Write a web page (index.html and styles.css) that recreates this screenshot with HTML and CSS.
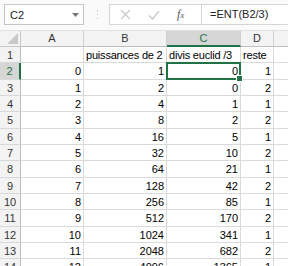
FILE: index.html
```html
<!DOCTYPE html>
<html>
<head>
<meta charset="utf-8">
<link rel="stylesheet" href="styles.css">
</head>
<body>
<div class="app">
  <div class="toolbar">
    <div class="namebox">
      <span class="ref">C2</span>
      <svg class="drop" width="7" height="4" viewBox="0 0 7 4"><path d="M0 0H7L3.5 4Z" fill="#777"/></svg>
    </div>
    <svg class="grip" width="3" height="12" viewBox="0 0 3 12"><rect x="1" y="1" width="1" height="1" fill="#bbb"/><rect x="1" y="5" width="1" height="1" fill="#bbb"/><rect x="1" y="9" width="1" height="1" fill="#bbb"/></svg>
    <div class="fxbox">
      <svg class="ic" width="11" height="11" viewBox="0 0 11 11"><path d="M1 1L10 10M10 1L1 10" stroke="#c8c8c8" stroke-width="1.2" fill="none"/></svg>
      <svg class="ic" width="12" height="10" viewBox="0 0 12 10"><path d="M1 5.5L4.5 9L11 1" stroke="#c8c8c8" stroke-width="1.2" fill="none"/></svg>
      <span class="fx"><i>f</i><span class="x">x</span></span>
    </div>
    <div class="formula">=ENT(B2/3)</div>
  </div>
  <div class="sheet">
    <div class="corner"><svg width="11" height="11" viewBox="0 0 11 11"><path d="M11 0V11H0Z" fill="#c9c9c9"/></svg></div>
    <div class="ch">A</div><div class="ch">B</div><div class="ch sel">C</div><div class="ch">D</div><div class="ch last"></div>

    <div class="rh">1</div><div class="c"></div><div class="c t">puissances de 2</div><div class="c t">divis euclid /3</div><div class="c t">reste</div><div class="c"></div>
    <div class="rh sel">2</div><div class="c">0</div><div class="c">1</div><div class="c active">0</div><div class="c">1</div><div class="c"></div>
    <div class="rh">3</div><div class="c">1</div><div class="c">2</div><div class="c">0</div><div class="c">2</div><div class="c"></div>
    <div class="rh">4</div><div class="c">2</div><div class="c">4</div><div class="c">1</div><div class="c">1</div><div class="c"></div>
    <div class="rh">5</div><div class="c">3</div><div class="c">8</div><div class="c">2</div><div class="c">2</div><div class="c"></div>
    <div class="rh">6</div><div class="c">4</div><div class="c">16</div><div class="c">5</div><div class="c">1</div><div class="c"></div>
    <div class="rh">7</div><div class="c">5</div><div class="c">32</div><div class="c">10</div><div class="c">2</div><div class="c"></div>
    <div class="rh">8</div><div class="c">6</div><div class="c">64</div><div class="c">21</div><div class="c">1</div><div class="c"></div>
    <div class="rh">9</div><div class="c">7</div><div class="c">128</div><div class="c">42</div><div class="c">2</div><div class="c"></div>
    <div class="rh">10</div><div class="c">8</div><div class="c">256</div><div class="c">85</div><div class="c">1</div><div class="c"></div>
    <div class="rh">11</div><div class="c">9</div><div class="c">512</div><div class="c">170</div><div class="c">2</div><div class="c"></div>
    <div class="rh">12</div><div class="c">10</div><div class="c">1024</div><div class="c">341</div><div class="c">1</div><div class="c"></div>
    <div class="rh">13</div><div class="c">11</div><div class="c">2048</div><div class="c">682</div><div class="c">2</div><div class="c"></div>
    <div class="rh">14</div><div class="c">12</div><div class="c">4096</div><div class="c">1365</div><div class="c">1</div><div class="c"></div>
  </div>
</div>
</body>
</html>
```
FILE: styles.css
```css
html, body {
  margin: 0;
  padding: 0;
  background: #fff;
}
.app {
  width: 288px;
  height: 266px;
  overflow: hidden;
  font-family: "Liberation Sans", Arial, sans-serif;
  font-size: 11px;
  color: #000;
}
.toolbar {
  height: 31px;
  box-sizing: border-box;
  padding-top: 4px;
  display: flex;
  align-items: flex-start;
  background: #fafafa;
  border-bottom: 1px solid #e1e1e1;
}
.namebox {
  margin-left: 4px;
  width: 80px;
  height: 21px;
  box-sizing: border-box;
  border: 1px solid #c6c6c6;
  background: #fff;
  display: flex;
  align-items: center;
  justify-content: space-between;
  padding: 0 4px 0 5px;
  color: #222;
}
.grip {
  margin: 5px 0 0 12px;
}
.fxbox {
  margin-left: 10px;
  width: 92px;
  height: 21px;
  box-sizing: border-box;
  border: 1px solid #d6d6d6;
  border-right: none;
  background: #fff;
  display: flex;
  align-items: center;
  padding-left: 10px;
  gap: 17px;
}
.fx {
  font-family: "Liberation Serif", serif;
  font-size: 12px;
  color: #555;
}
.fx .x {
  font-size: 9px;
  font-style: italic;
}
.formula {
  flex: 1;
  height: 21px;
  box-sizing: border-box;
  border: 1px solid #d6d6d6;
  border-right: none;
  background: #fff;
  padding-left: 8px;
  line-height: 19px;
  color: #222;
}
.sheet {
  display: grid;
  grid-template-columns: 21px 63px 83px 74px 33px 20px;
  grid-template-rows: 16px;
  grid-auto-rows: 16.33px;
}
.sheet > div {
  box-sizing: border-box;
  border-right: 1px solid #dadada;
  border-bottom: 1px solid #dadada;
  white-space: nowrap;
}
.corner {
  background: #f3f3f3;
  display: flex;
  align-items: flex-end;
  justify-content: flex-end;
  padding: 0 2px 2px 0;
  border-right-color: #c8c8c8 !important;
  border-bottom-color: #c8c8c8 !important;
}
.ch {
  background: #f3f3f3;
  text-align: center;
  line-height: 15px;
  color: #333;
  border-right-color: #d0d0d0 !important;
  border-bottom-color: #bfbfbf !important;
}
.ch.sel {
  background: #d6d6d6;
  color: #217346;
  border-bottom: 2px solid #217346 !important;
}
.rh {
  background: #f3f3f3;
  text-align: center;
  line-height: 16px;
  color: #333;
  border-right-color: #bfbfbf !important;
  border-bottom-color: #d8d8d8 !important;
}
.rh.sel {
  background: #d6d6d6;
  color: #217346;
  border-right: 2px solid #217346 !important;
}
.c {
  text-align: right;
  padding-right: 2px;
  line-height: 16px;
}
.c.t {
  text-align: left;
  padding-left: 2px;
  padding-right: 0;
  letter-spacing: -0.2px;
}
.c.active {
  position: relative;
}
.c.active::before {
  content: "";
  position: absolute;
  left: -1px;
  top: -1px;
  right: -1px;
  bottom: -1px;
  border: 2px solid #217346;
}
.c.active::after {
  content: "";
  position: absolute;
  right: -3px;
  bottom: -3px;
  width: 5px;
  height: 5px;
  background: #217346;
  border: 1px solid #fff;
}
```
